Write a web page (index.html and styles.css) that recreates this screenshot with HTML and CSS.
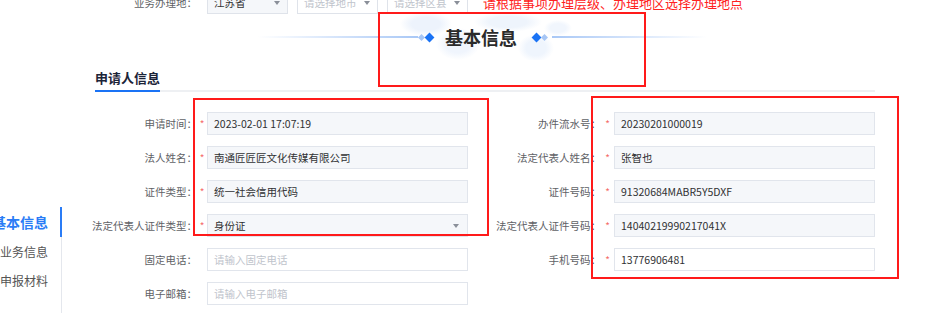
FILE: index.html
```html
<!DOCTYPE html>
<html lang="zh-CN">
<head>
    <meta charset="UTF-8">
    <title>基本信息</title>
    <link rel="stylesheet" href="styles.css">
</head>
<body>
<div class="top-row">
    <span class="top-label">业务办理地：</span>
    <div class="select"><span>江苏省</span><i class="caret"></i></div>
    <div class="select placeholder"><span>请选择地市</span><i class="caret"></i></div>
    <div class="select placeholder"><span>请选择区县</span><i class="caret"></i></div>
    <span class="hint">请根据事项办理层级、办理地区选择办理地点</span>
</div>

<div class="title-row">
    <span class="line line-left"></span>
    <span class="diamonds"><i class="dia faded"></i><i class="dia"></i></span>
    <h1>基本信息</h1>
    <span class="diamonds"><i class="dia"></i><i class="dia faded"></i></span>
    <span class="line line-right"></span>
</div>

<div class="section-head">
    <h2>申请人信息</h2>
</div>

<div class="main">
    <ul class="side-nav">
        <li class="active">基本信息</li>
        <li>业务信息</li>
        <li>申报材料</li>
    </ul>

    <div class="form">
        <label>申请时间：</label><span class="star">*</span>
        <div class="input disabled">2023-02-01 17:07:19</div>
        <label>办件流水号：</label><span class="star">*</span>
        <div class="input disabled">20230201000019</div>

        <label>法人姓名：</label><span class="star">*</span>
        <div class="input disabled">南通匠匠匠文化传媒有限公司</div>
        <label>法定代表人姓名：</label><span class="star">*</span>
        <div class="input disabled">张智也</div>

        <label>证件类型：</label><span class="star">*</span>
        <div class="input disabled">统一社会信用代码</div>
        <label>证件号码：</label><span class="star">*</span>
        <div class="input disabled">91320684MABR5Y5DXF</div>

        <label>法定代表人证件类型：</label><span class="star">*</span>
        <div class="input disabled select-input">身份证<i class="caret"></i></div>
        <label>法定代表人证件号码：</label><span class="star">*</span>
        <div class="input disabled">14040219990217041X</div>

        <label>固定电话：</label><span class="star"></span>
        <div class="input placeholder">请输入固定电话</div>
        <label>手机号码：</label><span class="star">*</span>
        <div class="input">13776906481</div>

        <label>电子邮箱：</label><span class="star"></span>
        <div class="input placeholder">请输入电子邮箱</div>
    </div>
</div>

<!-- annotation frames drawn over the screenshot -->
<div class="mark mark-title"></div>
<div class="mark mark-left"></div>
<div class="mark mark-right"></div>
</body>
</html>
```

FILE: styles.css
```css
body {
  margin: 0;
  background: white;
  font-family: "Noto Sans CJK SC", "Noto Sans", sans-serif;
  color: #333;
  overflow: hidden;
}

/* region picker */
.top-row {
  display: flex;
  align-items: center;
  height: 23px;
  margin-top: -9px;
  font-size: 10.5px;
}
.top-label {
  width: 197px;
  margin-right: 10px;
  text-align: right;
  color: #606266;
}
.select {
  position: relative;
  display: flex;
  align-items: center;
  box-sizing: border-box;
  width: 81px;
  height: 23px;
  padding: 0 6px;
  margin-right: 9px;
  border: 1px solid #dfe3ea;
  background: #f5f7fa;
}
.select.placeholder {
  background: white;
  color: #c0c4cc;
}
.caret {
  position: absolute;
  right: 7px;
  top: 50%;
  margin-top: -2px;
  border-left: 3px solid transparent;
  border-right: 3px solid transparent;
  border-top: 4px solid #8a8f99;
}
.hint {
  margin-left: 6px;
  font-size: 13px;
  color: #ff2222;
}

/* big title */
.title-row {
  display: flex;
  align-items: center;
  height: 46px;
  margin-left: 258px;
  width: 452px;
  background:
    radial-gradient(ellipse 26px 12px at 168px 10px, #edf3fc 55%, transparent 100%),
    radial-gradient(ellipse 22px 16px at 200px 30px, #f0f5fd 55%, transparent 100%),
    radial-gradient(ellipse 34px 10px at 250px 8px, #eef4fc 55%, transparent 100%),
    radial-gradient(ellipse 18px 14px at 278px 34px, #eff5fd 55%, transparent 100%),
    radial-gradient(ellipse 14px 8px at 300px 14px, #f1f6fd 55%, transparent 100%);
}
.line {
  height: 2px;
}
.line-left {
  width: 160px;
  background: linear-gradient(to right, rgba(160, 196, 245, 0), #a9c8f6);
}
.line-right {
  width: 155px;
  margin-left: 4px;
  background: linear-gradient(to right, #a9c8f6, rgba(160, 196, 245, 0));
}
.diamonds {
  display: flex;
  align-items: center;
}
.dia {
  display: block;
  width: 7px;
  height: 7px;
  background: #1a73f5;
  transform: rotate(45deg);
  margin: 0 1px;
}
.dia.faded {
  width: 5px;
  height: 5px;
  background: #a7c6f5;
}
h1 {
  margin: 0 15px 0 11px;
  font-size: 18px;
  font-weight: bold;
  color: #2b2b2b;
  line-height: 24px;
}

/* section heading */
.section-head {
  display: flex;
  margin: 8px 0 0 95px;
  width: 780px;
  border-bottom: 2px solid #eef0f3;
}
h2 {
  margin: 0 0 -2px;
  padding-bottom: 2px;
  font-size: 13px;
  line-height: 20px;
  color: #1c2438;
  border-bottom: 2px solid #1a73f5;
}

/* form */
.main {
  display: flex;
  margin-top: 20px;
}
.side-nav {
  list-style: none;
  margin: 95px 0 0;
  padding: 0 0 18px;
  width: 62px;
  flex: none;
  box-sizing: border-box;
  border-right: 1px solid #e4e7ed;
  font-size: 12px;
  color: #555;
}
.side-nav li {
  display: flex;
  justify-content: flex-end;
  align-items: center;
  height: 29px;
  padding-right: 12px;
  margin-right: -1px;
  white-space: nowrap;
  border-right: 2px solid transparent;
}
.side-nav li.active {
  height: 30px;
  font-size: 14px;
  font-weight: bold;
  color: #2a7cf6;
  border-right-color: #2a7cf6;
}

.form {
  display: grid;
  grid-template-columns: 135px 10px 261px 133px 13px 261px;
  grid-auto-rows: 23px;
  row-gap: 11px;
  align-items: center;
  align-self: flex-start;
  font-size: 10.5px;
}
.form label {
  text-align: right;
  white-space: nowrap;
  color: #606266;
}
.star {
  justify-self: center;
  color: #f56c6c;
  font-size: 10px;
}
.input {
  position: relative;
  display: flex;
  align-items: center;
  box-sizing: border-box;
  height: 23px;
  padding: 0 6px;
  border: 1px solid #e1e5ec;
  background: white;
  color: #303133;
}
.input.disabled {
  background: #f5f7fa;
}
.input.placeholder {
  color: #c0c4cc;
}
.select-input .caret {
  right: 8px;
}

/* red annotation frames */
.mark {
  position: absolute;
  border: 2px solid #ff1a1a;
  box-sizing: border-box;
}
.mark-title {
  left: 378px;
  top: 12px;
  width: 268px;
  height: 75px;
}
.mark-left {
  left: 193px;
  top: 98px;
  width: 296px;
  height: 138px;
}
.mark-right {
  left: 591px;
  top: 96px;
  width: 308px;
  height: 183px;
}
```
